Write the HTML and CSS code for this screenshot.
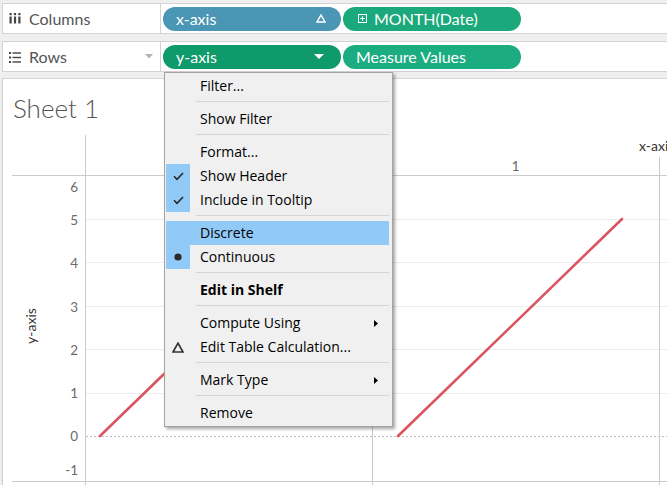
FILE: index.html
```html
<!DOCTYPE html>
<html>
<head>
<meta charset="utf-8">
<link rel="stylesheet" href="styles.css">
</head>
<body>
  <div class="shelf-row">
    <div class="shelf-label">
      <svg class="shelf-icon" width="12" height="11" viewBox="0 0 12 11">
        <rect x="0.5" y="0" width="2.2" height="2.2" fill="#444"/>
        <rect x="0.5" y="3.5" width="2.2" height="7" fill="#444"/>
        <rect x="4.9" y="0" width="2.2" height="2.2" fill="#444"/>
        <rect x="4.9" y="3.5" width="2.2" height="7" fill="#444"/>
        <rect x="9.3" y="0" width="2.2" height="2.2" fill="#444"/>
        <rect x="9.3" y="3.5" width="2.2" height="7" fill="#444"/>
      </svg>
      <span>Columns</span>
    </div>
    <div class="shelf-drop">
      <div class="pill pill-blue pill-split">
        <span>x-axis</span>
        <svg width="10" height="9" viewBox="0 0 10 9"><polygon points="5,1 9,8 1,8" fill="none" stroke="#fff" stroke-width="1.5"/></svg>
      </div>
      <div class="pill pill-green pill-icon">
        <svg width="9" height="9" viewBox="0 0 9 9"><rect x="0.5" y="0.5" width="8" height="8" fill="none" stroke="#fff" stroke-width="1"/><path d="M4.5 2.2 V6.8 M2.2 4.5 H6.8" stroke="#fff" stroke-width="1"/></svg>
        <span>MONTH(Date)</span>
      </div>
    </div>
  </div>
  <div class="shelf-row">
    <div class="shelf-label">
      <svg class="shelf-icon" width="12" height="12" viewBox="0 0 12 12">
        <rect x="0" y="1" width="2" height="2" fill="#444"/>
        <rect x="3.5" y="1.3" width="8.5" height="1.4" fill="#444"/>
        <rect x="0" y="5.5" width="2" height="2" fill="#444"/>
        <rect x="3.5" y="5.8" width="8.5" height="1.4" fill="#444"/>
        <rect x="0" y="10" width="2" height="2" fill="#444"/>
        <rect x="3.5" y="10.3" width="8.5" height="1.4" fill="#444"/>
      </svg>
      <span>Rows</span>
      <svg class="shelf-caret" width="8" height="5" viewBox="0 0 8 5"><polygon points="0,0 8,0 4,4.5" fill="#b5b5b5"/></svg>
    </div>
    <div class="shelf-drop">
      <div class="pill pill-dark pill-split pill-dd">
        <span>y-axis</span>
        <svg width="10" height="5" viewBox="0 0 10 5"><polygon points="0,0 10,0 5,5" fill="#fff"/></svg>
      </div>
      <div class="pill pill-green2">
        <span>Measure Values</span>
      </div>
    </div>
  </div>

  <div class="sheet">
    <div class="sheet-title">Sheet 1</div>
    <svg class="chart" width="664" height="355" viewBox="3 130 664 355">
      <g stroke="#ececec" stroke-width="1">
        <line x1="86" y1="219.5" x2="667" y2="219.5"/>
        <line x1="86" y1="262.5" x2="667" y2="262.5"/>
        <line x1="86" y1="306.5" x2="667" y2="306.5"/>
        <line x1="86" y1="349.5" x2="667" y2="349.5"/>
        <line x1="86" y1="393.5" x2="667" y2="393.5"/>
      </g>
      <line x1="86" y1="436.5" x2="667" y2="436.5" stroke="#bdbdbd" stroke-width="1" stroke-dasharray="2,2"/>
      <g stroke="#cbcbcb" stroke-width="1">
        <line x1="85.5" y1="135" x2="85.5" y2="485"/>
        <line x1="372.5" y1="157" x2="372.5" y2="485"/>
        <line x1="659.5" y1="157" x2="659.5" y2="485"/>
        <line x1="12" y1="175.5" x2="667" y2="175.5"/>
        <line x1="12" y1="481.5" x2="667" y2="481.5"/>
      </g>
      <g stroke="#da5560" stroke-width="2.6" stroke-linecap="round">
        <line x1="100" y1="436" x2="324" y2="219"/>
        <line x1="398" y1="436" x2="622" y2="219"/>
      </g>
      <g class="axis-num" text-anchor="end">
        <text x="78" y="192">6</text>
        <text x="78" y="225">5</text>
        <text x="78" y="268">4</text>
        <text x="78" y="311.5">3</text>
        <text x="78" y="354.5">2</text>
        <text x="78" y="398">1</text>
        <text x="78" y="441">0</text>
        <text x="78" y="475">-1</text>
      </g>
      <text class="axis-head" x="515.5" y="170.5" text-anchor="middle">1</text>
      <text class="axis-title" x="639" y="151">x-axis</text>
      <text class="axis-title" transform="translate(36 326) rotate(-90)" text-anchor="middle">y-axis</text>
    </svg>
  </div>

  <div class="menu">
    <div class="mi"><div class="mi-icon"></div><div class="mi-text">Filter...</div></div>
    <div class="sep"></div>
    <div class="mi"><div class="mi-icon"></div><div class="mi-text">Show Filter</div></div>
    <div class="sep"></div>
    <div class="mi"><div class="mi-icon"></div><div class="mi-text">Format...</div></div>
    <div class="mi"><div class="mi-icon on"><svg width="11" height="9" viewBox="0 0 11 9"><path d="M1 4.3 L4 7.3 L10 1" fill="none" stroke="#2a2a2a" stroke-width="1.6"/></svg></div><div class="mi-text">Show Header</div></div>
    <div class="mi"><div class="mi-icon on"><svg width="11" height="9" viewBox="0 0 11 9"><path d="M1 4.3 L4 7.3 L10 1" fill="none" stroke="#2a2a2a" stroke-width="1.6"/></svg></div><div class="mi-text">Include in Tooltip</div></div>
    <div class="sep"></div>
    <div class="mi active"><div class="mi-icon"></div><div class="mi-text">Discrete</div></div>
    <div class="mi"><div class="mi-icon on"><svg width="8" height="8" viewBox="0 0 8 8"><circle cx="4" cy="4" r="3.6" fill="#2a2a2a"/></svg></div><div class="mi-text">Continuous</div></div>
    <div class="sep"></div>
    <div class="mi"><div class="mi-icon"></div><div class="mi-text bold">Edit in Shelf</div></div>
    <div class="sep"></div>
    <div class="mi"><div class="mi-icon"></div><div class="mi-text">Compute Using</div><svg class="mi-arrow" width="4" height="7" viewBox="0 0 4 7"><polygon points="0,0 4,3.5 0,7" fill="#000"/></svg></div>
    <div class="mi"><div class="mi-icon"><svg width="12" height="11" viewBox="0 0 12 11"><polygon points="6,1.2 11,10 1,10" fill="none" stroke="#333" stroke-width="1.7" stroke-linejoin="miter"/></svg></div><div class="mi-text">Edit Table Calculation...</div></div>
    <div class="sep"></div>
    <div class="mi"><div class="mi-icon"></div><div class="mi-text">Mark Type</div><svg class="mi-arrow" width="4" height="7" viewBox="0 0 4 7"><polygon points="0,0 4,3.5 0,7" fill="#000"/></svg></div>
    <div class="sep"></div>
    <div class="mi"><div class="mi-icon"></div><div class="mi-text">Remove</div></div>
  </div>
</body>
</html>
```
FILE: styles.css
```css
* { box-sizing: border-box; }

html, body {
  margin: 0;
  width: 667px;
  height: 485px;
  overflow: hidden;
}

body {
  position: relative;
  padding: 3px 0 0 2px;
  background: #efefef;
  font-family: Lato, "Open Sans", sans-serif;
}

.shelf-row {
  display: flex;
  height: 31px;
}
.shelf-row + .shelf-row { margin-top: 7px; }

.shelf-label {
  width: 159px;
  flex: none;
  display: flex;
  align-items: center;
  gap: 8px;
  padding-left: 6px;
  background: #fff;
  border: 1px solid #d3d3d3;
  font-size: 16px;
  color: #555;
}
.shelf-icon { flex: none; }
.shelf-caret { margin-left: auto; margin-right: 7px; }

.shelf-drop {
  flex: 1;
  display: flex;
  align-items: center;
  gap: 2px;
  padding-left: 2px;
  background: #fff;
  border-top: 1px solid #d3d3d3;
  border-bottom: 1px solid #d3d3d3;
}

.pill {
  width: 178px;
  height: 24px;
  border-radius: 12px;
  display: flex;
  align-items: center;
  padding: 0 14px 0 13px;
  color: #fff;
  font-size: 16px;
}
.pill-split { justify-content: space-between; padding-right: 15px; }
.pill-dd { padding-right: 17px; }
.pill-icon { padding-left: 15px; gap: 7px; }
.pill-blue { background: #4a96b4; }
.pill-green { background: #1ba87b; }
.pill-dark { background: #0f9a6b; }
.pill-green2 { background: #1bac7f; }

.sheet {
  margin-top: 6px;
  height: 407px;
  background: #fff;
  border-left: 1px solid #d0d0d0;
  border-top: 1px solid #d6d6d6;
}

.sheet-title {
  height: 51px;
  padding: 14px 0 0 10px;
  font-size: 26px;
  line-height: 1.2;
  font-weight: 300;
  color: #555;
}

.chart { display: block; }

.axis-num {
  font-family: Lato, sans-serif;
  font-size: 13.5px;
  fill: #6b6b6b;
}
.axis-head {
  font-family: Lato, sans-serif;
  font-size: 14px;
  fill: #6b6b6b;
}
.axis-title {
  font-family: Lato, sans-serif;
  font-size: 14px;
  fill: #333;
}

.menu {
  position: absolute;
  left: 164px;
  top: 72px;
  width: 229px;
  padding: 1px 3px 1px 1px;
  background: #f0f0f0;
  border: 1px solid #a3a3a3;
  box-shadow: 2px 2px 3px rgba(0, 0, 0, 0.35);
  font-family: "Open Sans", sans-serif;
  font-size: 14px;
  color: #000;
}

.mi {
  display: flex;
  align-items: center;
  height: 24px;
  line-height: 24px;
}
.mi.active { background: #91c9f7; }

.mi-icon {
  width: 24px;
  height: 24px;
  flex: none;
  display: flex;
  align-items: center;
  justify-content: center;
}
.mi-icon.on { background: #91c9f7; }

.mi-text {
  flex: 1;
  padding-left: 10px;
  white-space: nowrap;
}
.mi-text.bold { font-weight: 700; }

.mi-arrow { margin-right: 11px; flex: none; }

.sep {
  height: 9px;
  padding: 3px 0 0 30px;
}
.sep::before {
  content: "";
  display: block;
  height: 1px;
  background: #d5d5d5;
}
```
